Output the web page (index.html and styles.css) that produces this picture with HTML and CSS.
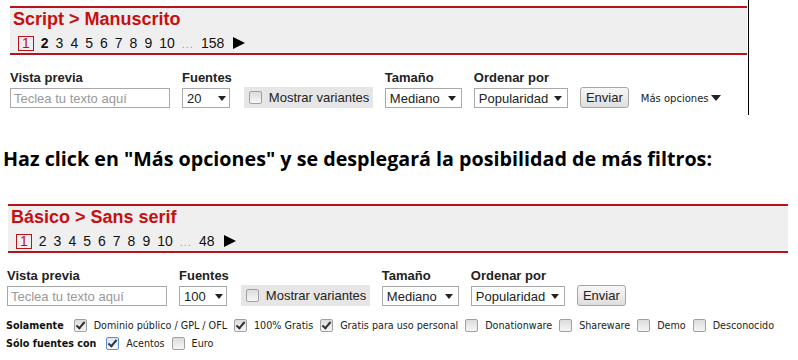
FILE: index.html
```html
<!DOCTYPE html>
<html lang="es">
<head>
<meta charset="UTF-8">
<meta name="viewport" content="width=device-width, initial-scale=1.0">
<title>Filtros de fuentes</title>
<link rel="stylesheet" href="styles.css">
</head>
<body>
    <div class="shot shot-one">
        <div class="bar">
            <h2 class="crumb">Script &gt; Manuscrito</h2>
            <div class="pager">
                <span class="page page-current">1</span>
                <a class="page page-seen" href="#">2</a>
                <a class="page" href="#">3</a>
                <a class="page" href="#">4</a>
                <a class="page" href="#">5</a>
                <a class="page" href="#">6</a>
                <a class="page" href="#">7</a>
                <a class="page" href="#">8</a>
                <a class="page" href="#">9</a>
                <a class="page" href="#">10</a>
                <span class="dots">...</span>
                <a class="page" href="#">158</a>
                <a class="next" href="#"></a>
            </div>
        </div>
        <form class="filters">
            <div class="field">
                <label for="preview1">Vista previa</label>
                <input class="text-input" type="text" id="preview1" placeholder="Teclea tu texto aquí">
            </div>
            <div class="field">
                <label for="count1">Fuentes</label>
                <span class="select select-count"><select id="count1"><option>20</option></select></span>
            </div>
            <label class="toggle"><input class="check" type="checkbox"> Mostrar variantes</label>
            <div class="field">
                <label for="size1">Tamaño</label>
                <span class="select select-size"><select id="size1"><option>Mediano</option></select></span>
            </div>
            <div class="field">
                <label for="order1">Ordenar por</label>
                <span class="select select-order"><select id="order1"><option>Popularidad</option></select></span>
            </div>
            <button class="send" type="button">Enviar</button>
            <a class="more" href="#">Más opciones</a>
        </form>
    </div>

    <h1 class="note">Haz click en "Más opciones" y se desplegará la posibilidad de más filtros:</h1>

    <div class="shot shot-two">
        <div class="bar">
            <h2 class="crumb">Básico &gt; Sans serif</h2>
            <div class="pager">
                <span class="page page-current">1</span>
                <a class="page" href="#">2</a>
                <a class="page" href="#">3</a>
                <a class="page" href="#">4</a>
                <a class="page" href="#">5</a>
                <a class="page" href="#">6</a>
                <a class="page" href="#">7</a>
                <a class="page" href="#">8</a>
                <a class="page" href="#">9</a>
                <a class="page" href="#">10</a>
                <span class="dots">...</span>
                <a class="page" href="#">48</a>
                <a class="next" href="#"></a>
            </div>
        </div>
        <form class="filters">
            <div class="field">
                <label for="preview2">Vista previa</label>
                <input class="text-input" type="text" id="preview2" placeholder="Teclea tu texto aquí">
            </div>
            <div class="field">
                <label for="count2">Fuentes</label>
                <span class="select select-count"><select id="count2"><option>100</option></select></span>
            </div>
            <label class="toggle"><input class="check" type="checkbox"> Mostrar variantes</label>
            <div class="field">
                <label for="size2">Tamaño</label>
                <span class="select select-size"><select id="size2"><option>Mediano</option></select></span>
            </div>
            <div class="field">
                <label for="order2">Ordenar por</label>
                <span class="select select-order"><select id="order2"><option>Popularidad</option></select></span>
            </div>
            <button class="send" type="button">Enviar</button>
        </form>
        <div class="only">
            <div class="opt-row">
                <span class="opt-title">Solamente</span>
                <label class="opt"><input class="check" type="checkbox" checked> Dominio público / GPL / OFL</label>
                <label class="opt"><input class="check" type="checkbox" checked> 100% Gratis</label>
                <label class="opt"><input class="check" type="checkbox" checked> Gratis para uso personal</label>
                <label class="opt"><input class="check" type="checkbox"> Donationware</label>
                <label class="opt"><input class="check" type="checkbox"> Shareware</label>
                <label class="opt"><input class="check" type="checkbox"> Demo</label>
                <label class="opt"><input class="check" type="checkbox"> Desconocido</label>
            </div>
            <div class="opt-row">
                <span class="opt-title">Sólo fuentes con</span>
                <label class="opt"><input class="check check-hover" type="checkbox" checked> Acentos</label>
                <label class="opt"><input class="check" type="checkbox"> Euro</label>
            </div>
        </div>
    </div>
</body>
</html>
```

FILE: styles.css
```css
body {
    margin: 0;
    font-family: "Liberation Sans", Arial, sans-serif;
    color: #222;
    background-color: #fff;
}

/* each screenshot block */
.shot-one {
    box-sizing: border-box;
    width: 749px;
    height: 115px;
    padding-top: 6px;
    border-right: 1px solid #000;
}

.shot-one .bar {
    margin-left: 10px;
    width: 737px;
}

.shot-one .filters {
    margin-left: 10px;
}

.shot-two .bar {
    margin-left: 8px;
    width: 780px;
}

.shot-two .filters {
    margin-left: 7px;
}

.bar {
    box-sizing: border-box;
    background-color: #efefef;
    border-top: 2px solid #b8121b;
    border-bottom: 2px solid #b8121b;
    padding: 1px 3px 2px;
}

.crumb {
    margin: 0;
    font-size: 18px;
    line-height: 20px;
    font-weight: bold;
    color: #c80f0f;
}

.pager {
    display: flex;
    align-items: center;
    gap: 7px;
    margin: 6px 0 0 5px;
    font-size: 14px;
    line-height: 13px;
}

.page {
    color: #111;
    text-decoration: none;
}

.page-seen {
    font-weight: bold;
}

.page-current {
    border: 1px solid #b8121b;
    padding: 0 3px;
    color: #c80f0f;
}

.dots {
    color: #999;
    font-size: 11px;
    letter-spacing: 1px;
    margin-top: 3px;
}

.next {
    width: 0;
    height: 0;
    margin-left: 2px;
    border-left: 12px solid #000;
    border-top: 6px solid transparent;
    border-bottom: 6px solid transparent;
}

/* filter row */
.filters {
    display: flex;
    align-items: flex-end;
    gap: 12px;
    margin-top: 15px;
}

.field label {
    display: block;
    font-size: 13px;
    line-height: 15px;
    font-weight: bold;
    color: #222;
    margin-bottom: 3px;
}

.text-input {
    box-sizing: border-box;
    width: 160px;
    height: 20px;
    margin: 0;
    padding: 1px 3px;
    border: 1px solid #a9a9a9;
    font-family: "Liberation Sans", Arial, sans-serif;
    font-size: 13px;
    color: #222;
}

.text-input::placeholder {
    color: #999;
}

.select {
    position: relative;
    display: block;
}

.select select {
    appearance: none;
    -webkit-appearance: none;
    box-sizing: border-box;
    display: block;
    height: 20px;
    margin: 0;
    padding: 0 0 0 4px;
    border: 1px solid #a9a9a9;
    border-radius: 0;
    background-color: #fff;
    font-family: "Liberation Sans", Arial, sans-serif;
    font-size: 13px;
    color: #222;
}

.select::after {
    content: "";
    position: absolute;
    right: 6px;
    top: 8px;
    border-left: 4px solid transparent;
    border-right: 4px solid transparent;
    border-top: 5px solid #222;
    pointer-events: none;
}

.select-count select {
    width: 48px;
}

.select-size select {
    width: 77px;
}

.select-order select {
    width: 94px;
}

.toggle {
    box-sizing: border-box;
    display: flex;
    align-items: center;
    gap: 7px;
    width: 129px;
    height: 21px;
    padding-left: 5px;
    background-color: #e6e6e6;
    font-size: 13px;
    color: #222;
    white-space: nowrap;
}

.send {
    box-sizing: border-box;
    width: 49px;
    height: 21px;
    padding: 0;
    border: 1px solid #a6a6a6;
    border-radius: 3px;
    background: linear-gradient(#f7f7f7, #dedede);
    font-family: "Liberation Sans", Arial, sans-serif;
    font-size: 13px;
    color: #222;
}

.more {
    display: flex;
    align-items: center;
    gap: 2px;
    height: 20px;
    font-family: "DejaVu Sans", Verdana, sans-serif;
    font-size: 10px;
    color: #222;
    text-decoration: none;
}

.more::after {
    content: "";
    border-left: 5px solid transparent;
    border-right: 5px solid transparent;
    border-top: 6px solid #222;
}

/* checkboxes */
.check {
    appearance: none;
    -webkit-appearance: none;
    box-sizing: border-box;
    flex: none;
    width: 13px;
    height: 13px;
    margin: 0;
    border: 1px solid #a0a0a0;
    border-radius: 2px;
    background: linear-gradient(#dcdcdc, #f6f6f6);
}

.check:checked::after {
    content: "";
    display: block;
    width: 3px;
    height: 7px;
    margin: 0 0 0 3px;
    border: solid #333;
    border-width: 0 2px 2px 0;
    transform: rotate(40deg);
}

.check-hover {
    border-color: #5a8fd8;
    background: linear-gradient(#d9e7f8, #f4f8fd);
}

/* heading between the two shots */
.note {
    margin: 30px 0 31px 3px;
    font-family: "Open Sans", sans-serif;
    font-size: 19.7px;
    line-height: 28px;
    font-weight: bold;
    color: #000;
    white-space: nowrap;
}

/* extra filters */
.only {
    margin: 10px 0 0 6px;
    font-family: "DejaVu Sans", Verdana, sans-serif;
    font-size: 9.6px;
    color: #222;
}

.opt-row {
    display: flex;
    align-items: center;
    height: 18px;
    white-space: nowrap;
}

.opt-title {
    flex: none;
    font-weight: bold;
    color: #111;
    margin-right: 10px;
}

.opt {
    flex: none;
    display: flex;
    align-items: center;
    gap: 7px;
    margin-right: 7px;
}
```
